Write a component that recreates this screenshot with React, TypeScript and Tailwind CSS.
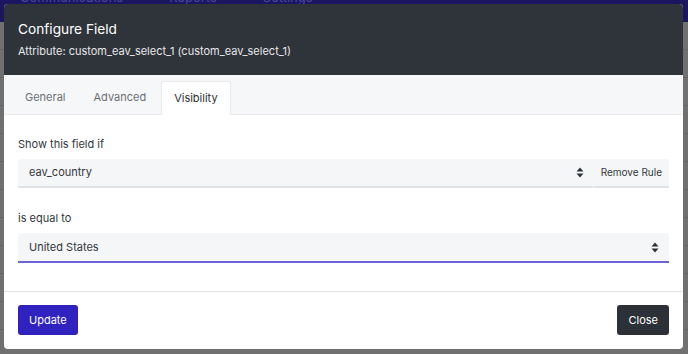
function SortArrows() {
  return (
    <svg width="8" height="11" viewBox="0 0 8 11" className="shrink-0">
      <path d="M4 0.5 L7.5 4.5 H0.5 Z" fill="#2d3238" />
      <path d="M4 10.5 L7.5 6.5 H0.5 Z" fill="#2d3238" />
    </svg>
  );
}

export default function App() {
  const tabs = ['General', 'Advanced', 'Visibility'];
  const active = 'Visibility';

  return (
    <div
      className="relative h-[354px] w-[688px] overflow-hidden bg-[#707070]"
      style={{ fontFamily: 'Inter, "Noto Sans", sans-serif' }}
    >
      {/* page behind the overlay */}
      <div className="h-[22px] bg-[#1b1660]">
        <div className="flex h-[4px] items-end gap-[46px] overflow-hidden pl-[20px] text-[13px] leading-[14px] text-[#4a46a0]">
          <span>Communications</span>
          <span>Reports</span>
          <span>Settings</span>
        </div>
      </div>
      <div className="flex flex-col">
        {Array.from({ length: 12 }).map((_, i) => (
          <div key={i} className="h-[28px] border-b border-[#646464]" />
        ))}
      </div>

      {/* modal */}
      <div className="absolute left-[4px] top-[4px] flex h-[345px] w-[679px] flex-col overflow-hidden rounded-[4px] bg-white">
        <div className="bg-[#2f343a] px-[14px] pb-[14px] pt-[15px]">
          <div className="text-[13.7px] leading-[20px] text-white">Configure Field</div>
          <div className="mt-[2px] text-[11px] leading-[20px] text-[#e6e7e9]">
            Attribute: custom_eav_select_1 (custom_eav_select_1)
          </div>
        </div>

        <div className="flex h-[41px] items-end gap-[2px] border-b border-[#e8eaed] bg-[#f6f7f9] pl-[8px]">
          {tabs.map((t) => (
            <div
              key={t}
              className={
                t === active
                  ? '-mb-px flex h-[34px] items-center rounded-t-[3px] border border-b-0 border-[#e8eaed] bg-white px-[12px] text-[11px] text-[#2b2f33]'
                  : 'flex h-[33px] items-center px-[13px] text-[11px] text-[#6b6f74]'
              }
            >
              {t}
            </div>
          ))}
        </div>

        <div className="flex flex-col px-[14px] pb-[28px] pt-[19px]">
          <div className="mb-[5px] text-[11px] leading-[20px] text-[#33373b]">Show this field if</div>
          <div className="flex h-[29px] rounded-t-[2px] bg-[#f5f6f8]">
            <div className="flex flex-1 items-center justify-between border-b-2 border-[#dfe2e6] pl-[11px] pr-[9px] text-[11px] text-[#33373b]">
              <span>eav_country</span>
              <SortArrows />
            </div>
            <div className="ml-px flex items-center border-b-2 border-[#dfe2e6] px-[7px] text-[10px] text-[#33373b]">
              Remove Rule
            </div>
          </div>

          <div className="mb-[5px] mt-[20px] text-[11px] leading-[20px] text-[#33373b]">is equal to</div>
          <div className="flex h-[30px] items-center justify-between rounded-t-[2px] border-b-2 border-[#6b63d6] bg-[#f5f6f8] pl-[11px] pr-[10px] text-[11px] text-[#33373b]">
            <span>United States</span>
            <SortArrows />
          </div>
        </div>

        <div className="flex items-center justify-between border-t border-[#dee2e6] px-[14px] pb-[14px] pt-[13px]">
          <button className="h-[30px] rounded-[3px] bg-[#2f22bf] px-[11px] text-[11px] text-white">Update</button>
          <button className="h-[30px] rounded-[3px] bg-[#2c3138] px-[11px] text-[11px] text-white">Close</button>
        </div>
      </div>
    </div>
  );
}
